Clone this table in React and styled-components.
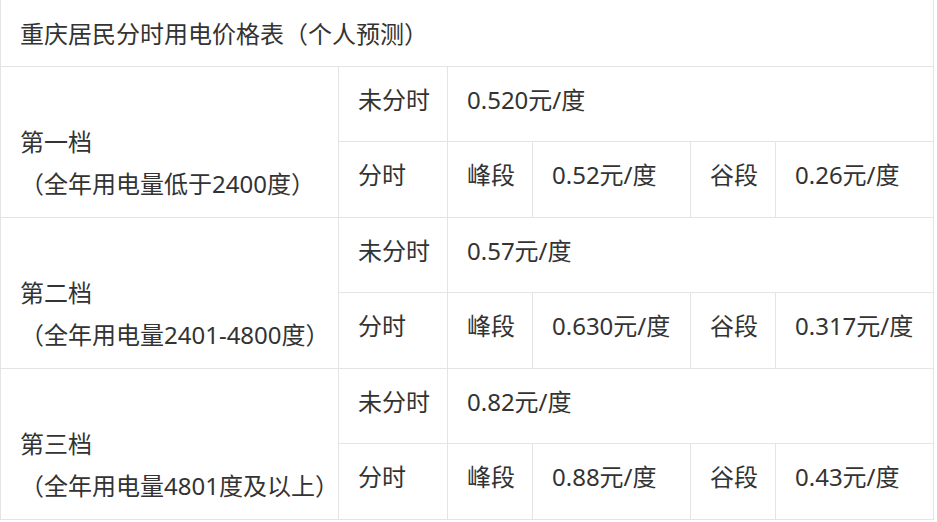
import React from 'react';
import styled, { createGlobalStyle } from 'styled-components';

const GlobalStyle = createGlobalStyle`
  html, body {
    margin: 0;
    padding: 0;
    background: #fff;
  }
  body {
    font-family: "Noto Sans", "Noto Sans CJK SC", sans-serif;
    color: #333;
  }
`;

const PriceGrid = styled.div`
  display: grid;
  grid-template-columns: 337px 108px 84px 157px 84px 157px;
  grid-template-rows: 66px 74px 75px 74px 75px 74px 75px;
  gap: 1px;
  width: fit-content;
  padding: 0 1px 1px 1px;
  background: #e4e4e4;
`;

const Cell = styled.div`
  background: #fff;
  display: flex;
  align-items: center;
  padding: 0 19px 12px;
  font-size: 24px;
  white-space: nowrap;
  grid-column: ${(p) => (p.span ? `span ${p.span}` : 'auto')};
`;

const Title = styled(Cell)`
  grid-column: 1 / -1;
  padding-bottom: 2px;
`;

const TierCell = styled.div`
  background: #fff;
  grid-row: span 2;
  display: flex;
  flex-direction: column;
  justify-content: center;
  padding: 42px 19px 0;
  font-size: 24px;
  line-height: 42px;
  white-space: nowrap;
`;

const tiers = [
  {
    name: '第一档',
    note: '（全年用电量低于2400度）',
    flat: '0.520元/度',
    peak: '0.52元/度',
    valley: '0.26元/度',
  },
  {
    name: '第二档',
    note: '（全年用电量2401-4800度）',
    flat: '0.57元/度',
    peak: '0.630元/度',
    valley: '0.317元/度',
  },
  {
    name: '第三档',
    note: '（全年用电量4801度及以上）',
    flat: '0.82元/度',
    peak: '0.88元/度',
    valley: '0.43元/度',
  },
];

export default function App() {
  return (
    <>
      <GlobalStyle />
      <PriceGrid>
        <Title>重庆居民分时用电价格表（个人预测）</Title>
        {tiers.map((t) => (
          <React.Fragment key={t.name}>
            <TierCell>
              <div>{t.name}</div>
              <div>{t.note}</div>
            </TierCell>
            <Cell>未分时</Cell>
            <Cell span={4}>{t.flat}</Cell>
            <Cell>分时</Cell>
            <Cell>峰段</Cell>
            <Cell>{t.peak}</Cell>
            <Cell>谷段</Cell>
            <Cell>{t.valley}</Cell>
          </React.Fragment>
        ))}
      </PriceGrid>
    </>
  );
}
